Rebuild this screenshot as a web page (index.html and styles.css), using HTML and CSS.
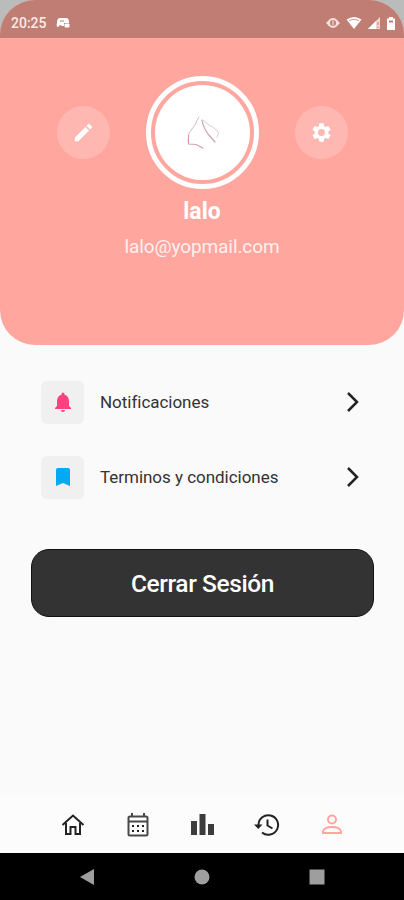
FILE: index.html
```html
<!DOCTYPE html>
<html lang="es">
<head>
  <meta charset="UTF-8" />
  <meta name="viewport" content="width=device-width, initial-scale=1.0"/>
  <title>Perfil</title>
  <link rel="stylesheet" href="styles.css">
</head>
<body>

  <header class="profile">
    <div class="status-bar">
      <span class="time">20:25</span>
      <svg class="game" width="15" height="12" viewBox="0 0 15 12"><path d="M4 1h6q3 0 3 4v1H8v3H6L4 8 2 10Q0 10 1 6 1 1 4 1z" fill="#fff"/><path d="M4 4h4" stroke="#c07d74"/><rect x="8.500" y="6.500" width="5" height="4" rx="1" fill="#fff"/></svg>
      <div class="signals">
        <svg width="16" height="14" viewBox="0 0 16 14"><path d="M1 7l3-3v6zM15 7l-3-3v6z" fill="#f6ded9"/><circle cx="8" cy="7" r="4" fill="none" stroke="#f6ded9" stroke-width="2"/><path d="M8 4.500v5" stroke="#f6ded9" stroke-width="1.200"/></svg>
        <svg width="16" height="14" viewBox="0 0 16 14"><path d="M.5 3.500q7.500-5 15 0L8 13z" fill="#fff"/><path d="M3 4.500q5-2.500 10 0" fill="none" stroke="#c07d74" stroke-width=".8"/></svg>
        <svg width="14" height="14" viewBox="0 0 14 14"><path d="M1 13L13 1v12z" fill="#f3d5cf"/><path d="M1 13l8-8v8z" fill="#fff"/><path d="M11 6v3M11 10.500V12" stroke="#c07d74"/></svg>
        <svg width="10" height="14" viewBox="0 0 10 14"><path d="M3 1h4v1.500h2V14H1V2.500h2z" fill="#fff"/><path d="M3 4.500h4v2H3z" fill="#c07d74"/></svg>
      </div>
    </div>

    <div class="profile-row">
      <button class="round-btn" aria-label="Editar">
        <svg width="24" height="24" viewBox="0 0 24 24"><path d="M3 17.250V21h3.750L17.810 9.940l-3.750-3.750L3 17.250zM20.710 7.040a1 1 0 0 0 0-1.410l-2.340-2.340a1 1 0 0 0-1.410 0l-1.830 1.830 3.750 3.750 1.830-1.830z"/></svg>
      </button>
      <div class="avatar">
        <div class="avatar-img">
          <svg width="36" height="38" viewBox="0 0 36 38" fill="none" stroke-linecap="round" stroke-linejoin="round">
            <path d="M14 3Q12 6 10 11L4 19L3 28" stroke="#d3bcc3" stroke-width="1"/>
            <path d="M3.500 21V30L11 30.500L18 34" stroke="#d2a2b0" stroke-width="1.200"/>
            <path d="M17 6Q18 13 23 20L30 28" stroke="#cba5b1" stroke-width="1.200"/>
            <path d="M18 6L24 11Q32 15 33.500 19L32 23" stroke="#dfcad0" stroke-width="1"/>
          </svg>
        </div>
      </div>
      <button class="round-btn" aria-label="Ajustes">
        <svg width="24" height="24" viewBox="0 0 24 24"><path d="M19.140 12.940c.04-.3.06-.61.06-.94s-.02-.64-.07-.94l2.030-1.580a.49.49 0 0 0 .12-.61l-1.920-3.320a.49.49 0 0 0-.59-.22l-2.390.96a7 7 0 0 0-1.620-.94l-.36-2.540a.48.48 0 0 0-.48-.41h-3.840c-.24 0-.43.17-.47.41l-.36 2.540c-.59.24-1.130.57-1.620.94l-2.390-.96a.48.48 0 0 0-.59.22L2.740 8.870a.48.48 0 0 0 .12.61l2.030 1.580a6 6 0 0 0 0 1.880l-2.030 1.580a.49.49 0 0 0-.12.61l1.920 3.320c.12.22.37.29.59.22l2.390-.96c.5.38 1.030.7 1.620.94l.36 2.540c.05.24.24.41.48.41h3.840c.24 0 .44-.17.47-.41l.36-2.540a7 7 0 0 0 1.620-.94l2.390.96c.22.08.47 0 .59-.22l1.920-3.320a.48.48 0 0 0-.12-.61zM12 15.600a3.600 3.600 0 1 1 0-7.200 3.600 3.600 0 0 1 0 7.200z"/></svg>
      </button>
    </div>

    <h1>lalo</h1>
    <p class="email">lalo@yopmail.com</p>
  </header>

  <main>
    <ul class="options">
      <li>
        <span class="option-icon bell">
          <svg width="24" height="24" viewBox="0 0 24 24"><path d="M12 22c1.100 0 2-.9 2-2h-4c0 1.100.9 2 2 2zm6-6v-5c0-3.070-1.640-5.640-4.500-6.320V4a1.500 1.500 0 0 0-3 0v.68C7.630 5.360 6 7.920 6 11v5l-2 2v1h16v-1z"/></svg>
        </span>
        <span class="option-text">Notificaciones</span>
        <svg class="arrow" width="14" height="22" viewBox="0 0 14 22"><path d="M2 2l9 9-9 9"/></svg>
      </li>
      <li>
        <span class="option-icon bookmark">
          <svg width="24" height="24" viewBox="0 0 24 24"><path d="M17 3H7c-1.100 0-2 .9-2 2v16l7-3 7 3V5c0-1.100-.9-2-2-2z"/></svg>
        </span>
        <span class="option-text">Terminos y condiciones</span>
        <svg class="arrow" width="14" height="22" viewBox="0 0 14 22"><path d="M2 2l9 9-9 9"/></svg>
      </li>
    </ul>
    <button class="logout">Cerrar Sesión</button>
  </main>

  <nav class="tabs">
    <a href="#" aria-label="Inicio">
      <svg width="26" height="26" viewBox="0 0 26 26"><path d="M2.500 13L13 3.500 23.500 13M6 11v11h4.500v-7h5v7H20V11" fill="none" stroke="#222" stroke-width="2"/></svg>
    </a>
    <a href="#" aria-label="Calendario">
      <svg width="26" height="26" viewBox="0 0 26 26"><rect x="3.500" y="4.500" width="19" height="19" rx="1.500" fill="none" stroke="#484848" stroke-width="2"/><path d="M3.500 9.500h19M7 1v4M19 1v4" stroke="#484848" stroke-width="2"/><path d="M7 13h2v2H7zM12 13h2v2h-2zM17 13h2v2h-2zM7 18h2v2H7zM12 18h2v2h-2zM17 18h2v2h-2z" fill="#222"/></svg>
    </a>
    <a href="#" aria-label="Estadísticas">
      <svg width="26" height="26" viewBox="0 0 26 26"><path d="M2 9h6v14H2zM10.500 2h6v21h-6zM19 12h6v11h-6z" fill="#3c3c3c"/></svg>
    </a>
    <a href="#" aria-label="Historial">
      <svg width="26" height="26" viewBox="0 0 26 26" fill="none" stroke="#222" stroke-width="2"><path d="M4.500 13A9.800 9.800 0 1 1 8 20.500M13.500 7.500v6l5 3"/><path d="M0 12.500h8.500L4.300 17z" fill="#222" stroke="none"/></svg>
    </a>
    <a href="#" aria-label="Perfil">
      <svg width="26" height="26" viewBox="0 0 26 26" fill="none" stroke="#ffa69e" stroke-width="2"><circle cx="13" cy="7.500" r="4"/><path d="M4 21v-1.500Q5 15 13 15t9 4.500V21z"/></svg>
    </a>
  </nav>

  <footer class="system-nav">
    <svg width="16" height="18" viewBox="0 0 16 18"><path d="M15 1v16L1 9z"/></svg>
    <svg width="16" height="16" viewBox="0 0 16 16"><circle cx="8" cy="8" r="7.500"/></svg>
    <svg width="16" height="16" viewBox="0 0 16 16"><path d="M.5.500h15v15H.5z"/></svg>
  </footer>

</body>
</html>
```
FILE: styles.css
```css
:root {
  --primary-color: #ffa69e;
  --bg-color: #fafafa;
  --dark-color: #333333;
}

* {
  margin: 0;
  padding: 0;
  box-sizing: border-box;
}

body {
  font-family: Roboto, "Liberation Sans", sans-serif;
  background: linear-gradient(#b9bcba 38px, var(--bg-color) 38px);
  color: #333;
  height: 900px;
  display: flex;
  flex-direction: column;
  overflow: hidden;
}

button {
  border: none;
  font-family: inherit;
  cursor: pointer;
}

svg {
  display: block;
  flex: none;
}

.profile {
  height: 345px;
  background-color: var(--primary-color);
  border-radius: 35px;
  overflow: hidden;
  text-align: center;
  color: #fff;
}

.status-bar {
  height: 38px;
  padding: 7px 8px 0 11px;
  background-color: #c07d74;
  display: flex;
  align-items: center;
}

.time {
  font-size: 14px;
  font-weight: 500;
  color: #fbe9e6;
}

.game {
  margin-left: 9px;
}

.signals {
  margin-left: auto;
  display: flex;
  align-items: center;
  gap: 5px;
}

.profile-row {
  display: flex;
  justify-content: space-between;
  align-items: center;
  padding: 0 56px 0 57px;
  margin-top: 38px;
}

.round-btn {
  width: 53px;
  height: 53px;
  border-radius: 50%;
  background-color: #ffb8b1;
  display: flex;
  align-items: center;
  justify-content: center;
}

.round-btn svg {
  fill: #fff;
  width: 23px;
  height: 23px;
}

.avatar {
  width: 113px;
  height: 113px;
  padding: 4px;
  border: 5px solid #fff;
  border-radius: 50%;
}

.avatar-img {
  height: 100%;
  border-radius: 50%;
  background-color: #fff;
  display: flex;
  align-items: center;
  justify-content: center;
}

.profile h1 {
  margin-top: 9px;
  font-size: 23px;
  line-height: 28px;
  font-weight: 700;
}

.email {
  margin-top: 9px;
  font-size: 19px;
  line-height: 24px;
  letter-spacing: -0.1px;
  color: #fff0ee;
}

main {
  flex: 1;
  padding: 35px 30px 0 31px;
}

.options {
  list-style: none;
  display: flex;
  flex-direction: column;
  gap: 31px;
  padding: 0 14px 0 10px;
}

.options li {
  display: flex;
  align-items: center;
  height: 44px;
}

.option-icon {
  width: 43px;
  height: 43px;
  border-radius: 6px;
  background-color: #f0f0f0;
  display: flex;
  align-items: center;
  justify-content: center;
}

.bell svg {
  fill: #ff4081;
}

.bookmark svg {
  fill: #03a9f4;
}

.option-text {
  flex: 1;
  margin-left: 16px;
  font-size: 17px;
  letter-spacing: -0.03px;
}

.arrow {
  fill: none;
  stroke: #222;
  stroke-width: 2.5;
}

.logout {
  width: 100%;
  height: 68px;
  margin-top: 50px;
  border-radius: 18px;
  border: 1px solid #111;
  background-color: var(--dark-color);
  color: #fff;
  font-size: 24.5px;
  font-weight: 500;
  letter-spacing: -0.4px;
}

.tabs {
  height: 57px;
  padding: 0 40px 0 41px;
  display: flex;
  align-items: center;
  background-color: #fcfcfc;
}

.tabs a {
  flex: 1;
  display: flex;
  justify-content: center;
}

.system-nav {
  height: 47px;
  padding: 0 79px;
  background-color: #000;
  display: flex;
  align-items: center;
  justify-content: space-between;
}

.system-nav svg {
  fill: #9e9e9e;
}
```
